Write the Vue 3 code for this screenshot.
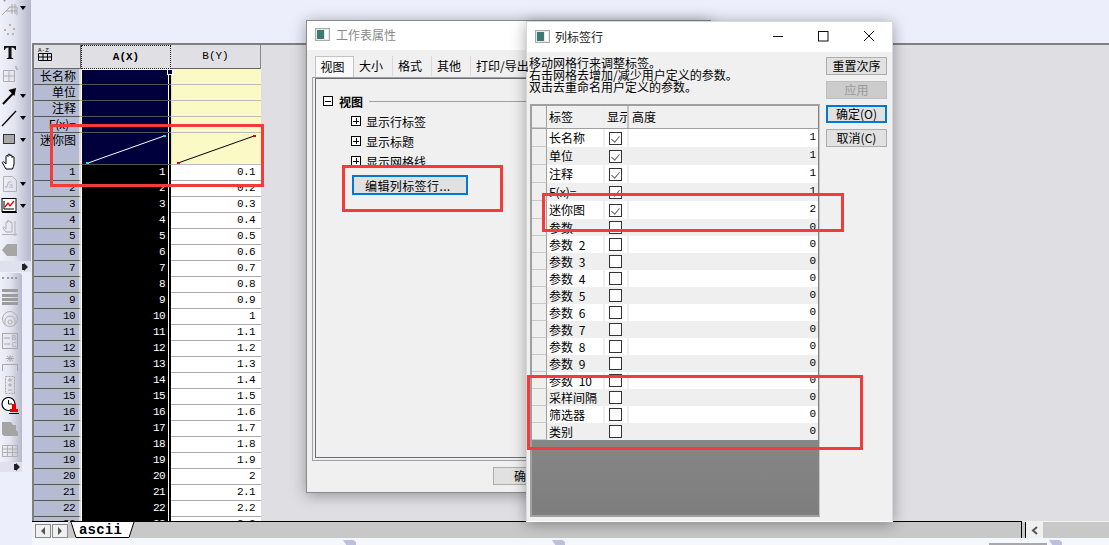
<template>
  <div class="screen">
    <aside class="dock">
      <div class="bar bar--top">
        <div class="bar__items bar__items--top">
          <div class="tool">
            <svg width="18" height="18" viewBox="0 0 18 18" fill="none" stroke="#a9a9a9"><path d="M1 16 L9 8 M5 12 h11 M8 8 h8 v8 M11 5 v10 M14 5 v10" /><path d="M0 -2 h7 l-3.5 5 z" fill="#9a9a9a" stroke="none" /></svg>
            <i class="caret"></i>
          </div>
          <div class="tool">
            <svg width="18" height="18" viewBox="0 0 18 18" fill="#b4b4b4"><rect x="8" y="3" width="2" height="2" /><rect x="3" y="8" width="2" height="2" /><rect x="12" y="7" width="2" height="2" /><rect x="6" y="12" width="2" height="2" /><rect x="11" y="12" width="2" height="2" /></svg>
          </div>
          <div class="tool">
            <svg width="18" height="18" viewBox="0 0 18 18" fill="#111"><path d="M3 3 h12 v4 h-1 c-.3-1.6-1-2.6-3.500-2.600 v9.500 c0 .9.4 1 1.700 1.100 v1 h-6.400 v-1 c1.300-.1 1.700-.2 1.700-1.100 v-9.500 c-2.500 0-3.200 1-3.500 2.600 h-1 z" /></svg>
          </div>
          <div class="tool">
            <svg width="18" height="18" viewBox="0 0 18 18" fill="none" stroke="#b0b0b0"><path d="M2.500 5.500 h11 v11 h-11 z M8 5.500 v11 M2.500 11 h11" /><path d="M14 1 l2 4 M15 1 l2 4" /></svg>
          </div>
          <div class="tool">
            <svg width="18" height="18" viewBox="0 0 18 18" fill="#000"><path d="M2 17 L13 5.500" stroke="#000" stroke-width="2" /><path d="M7.500 3 L15 1 L13.500 9 z" /></svg>
            <i class="caret"></i>
          </div>
          <div class="tool">
            <svg width="18" height="18" viewBox="0 0 18 18"><path d="M1 17 L15 2" stroke="#000" stroke-width="1.300" /></svg>
            <i class="caret"></i>
          </div>
          <div class="tool">
            <svg width="18" height="18" viewBox="0 0 18 18"><rect x="2.500" y="3.500" width="11" height="9" fill="#a8a8a8" stroke="#333" /></svg>
            <i class="caret"></i>
          </div>
          <div class="tool">
            <svg width="18" height="18" viewBox="0 0 18 18" fill="#fff" stroke="#000"><path d="M5 16 L1.500 10 c-.5-1 1-1.800 1.800-.8 L5 11 V3.500 c0-1.300 2-1.300 2 0 V2 c0-1.300 2-1.300 2 0 v1 c0-1.300 2-1.300 2 0 v1.500 c0-1.300 2-1.300 2 0 V11 c0 2-1 3-1.500 5 z" /></svg>
          </div>
          <div class="tool">
            <svg width="18" height="18" viewBox="0 0 18 18" fill="none" stroke="#b4b4b4"><path d="M2.500 1.500 h9 l4 4 v11 h-13 z" /><path d="M4 11 l1.500 2 l2-6 h3" /><text x="8" y="13" font-size="7" font-family="Liberation Sans" fill="#b4b4b4" stroke="none">a</text></svg>
            <i class="caret"></i>
          </div>
          <div class="tool">
            <svg width="18" height="18" viewBox="0 0 18 18" fill="none"><rect x="1" y="1.500" width="14" height="13" fill="#fff" stroke="#000" /><path d="M3 4 v8 h10" stroke="#000" /><path d="M4 10 L7 6 L9 9 L13 4" stroke="#e00000" stroke-width="1.300" /><path d="M1 15.500 h15" stroke="#000" /></svg>
            <i class="caret"></i>
          </div>
          <div class="tool">
            <svg width="18" height="18" viewBox="0 0 18 18" fill="none" stroke="#b2b2b2"><path d="M5 13 L2 9 c-.5-1 1-1.500 1.500-.8 L5 10 V3.500 c0-1 1.500-1 1.500 0 V2 c0-1 1.500-1 1.500 0 v1 c0-1 1.500-1 1.500 0 v1 c0-1 1.500-1 1.500 0 V13 z" /><path d="M1 15.500 h15 M14 2 v15" /></svg>
          </div>
          <div class="tool">
            <svg width="18" height="18" viewBox="0 0 18 18" fill="#a6a6a6"><path d="M1 9 L6 3 h10 v12 H6 z" /></svg>
          </div>
        </div>
        <div class="bar__foot"><i class="bar__more"></i></div>
      </div>

      <div class="bar bar--side">
        <div class="bar__grip"></div>
        <div class="bar__items">
          <div class="tool">
            <svg width="18" height="18" viewBox="0 0 18 18" fill="#9c9c9c"><rect x="1" y="1" width="16" height="3" /><rect x="1" y="6" width="16" height="3" /><rect x="1" y="10" width="16" height="3" /><rect x="1" y="14" width="16" height="3" /></svg>
          </div>
          <div class="tool">
            <svg width="18" height="18" viewBox="0 0 18 18" fill="none" stroke="#b0b0b0"><circle cx="9" cy="9" r="7.500" /><path d="M4 15 v-4 a5 5 0 0 1 10 0 v4" /><circle cx="9" cy="12" r="2" /></svg>
          </div>
          <div class="tool">
            <svg width="18" height="18" viewBox="0 0 18 18" fill="none" stroke="#a8a8a8"><rect x="1.500" y="1.500" width="15" height="15" /><path d="M3 6 h6 M3 12 h6" /><text x="10.500" y="8" font-size="7" font-family="Liberation Sans" fill="#a8a8a8" stroke="none">B</text><text x="10.500" y="15" font-size="7" font-family="Liberation Sans" fill="#a8a8a8" stroke="none">C</text></svg>
          </div>
          <div class="tool">
            <svg width="18" height="18" viewBox="0 0 18 18" fill="none" stroke="#a8a8a8"><path d="M1.500 17 V10.500 h15 V17 M6 2 l6 5 M12 2 l-6 5 M9 1 v7 M5 4.500 h8" /></svg>
          </div>
          <div class="tool">
            <svg width="18" height="18" viewBox="0 0 18 18" fill="none" stroke="#a8a8a8"><rect x="4.500" y="0.500" width="9" height="17" stroke-dasharray="2 1" /><path d="M7 4 h4 M9 2 v4 M7 9 h4 M9 7 v4 M7 14 h4" /></svg>
          </div>
          <div class="tool tool--up">
            <svg width="18" height="18" viewBox="0 0 18 18" fill="none"><circle cx="7.500" cy="7" r="6.500" fill="#fff" stroke="#000" stroke-width="1.200" /><path d="M7.500 3 V7 H11" stroke="#000" /><path d="M11 7 h4 v5 h2 v3 H9 v-3 h2 z" fill="#e00000" /><path d="M8 16.500 h10" stroke="#000" /></svg>
          </div>
          <div class="tool">
            <svg width="18" height="18" viewBox="0 0 18 18" fill="#a4a4a4"><path d="M1 2 h9 l2 3 h3 v5 l2 2 v4 H3 L1 14 z" /></svg>
          </div>
          <div class="tool">
            <svg width="18" height="18" viewBox="0 0 18 18" fill="none" stroke="#b0b0b0"><path d="M1.500 3.500 h15 v11 h-15 z M1.500 7 h15 M1.500 10.500 h15 M6.500 3.500 v11 M11.500 3.500 v11" /></svg>
          </div>
        </div>
        <div class="bar__foot bar__foot--side"><i class="bar__more"></i></div>
      </div>
    </aside>

    <main class="workspace">
      <section class="sheet">
        <div class="grid">
          <div class="corner">
            <svg width="16" height="16" viewBox="0 0 16 16" fill="none" stroke="#000"><path d="M1.500 7.500 h13 v7 h-13 z M1.500 11 h13 M6 7.500 v7 M10.500 7.500 v7" /><text x="1" y="5.500" font-size="6" font-family="Liberation Mono" fill="#000" stroke="none">A-Z</text></svg>
          </div>
          <div class="colhead colhead--active">A(X)</div>
          <div class="colhead">B(Y)</div>
          <div class="gap"></div>

          <template v-for="row in labelRows" :key="row.name">
            <div class="rowhead" :class="{ 'rowhead--tall': row.tall }">{{ row.name }}</div>
            <div class="meta meta--a" :class="{ 'meta--tall': row.tall }">
              <svg v-if="row.tall" width="86" height="32" viewBox="0 0 86 32">
                <path d="M6 30 L82 3" stroke="#fff" />
                <rect x="4" y="29" width="3" height="2" fill="#19e3e3" />
                <rect x="81" y="2" width="3" height="2" fill="#19e3e3" />
              </svg>
            </div>
            <div class="meta meta--b" :class="{ 'meta--tall': row.tall }">
              <svg v-if="row.tall" width="88" height="32" viewBox="0 0 88 32">
                <path d="M6 30 L82 3" stroke="#000" />
                <rect x="5" y="29" width="3" height="2" fill="#e00000" />
                <rect x="81" y="2" width="3" height="2" fill="#e00000" />
              </svg>
            </div>
            <div class="gap"></div>
          </template>

          <template v-for="row in dataRows" :key="row.n">
            <div class="rowhead num">{{ row.n }}</div>
            <div class="cell cell--a num">{{ row.n }}</div>
            <div class="cell cell--b num">{{ row.v }}</div>
            <div class="gap"></div>
          </template>
          <i class="selection-top"></i>
          <i class="handle"></i>
        </div>
      </section>

      <footer class="tabbar">
        <div class="tabbar__nav">
          <button class="nav-btn"><i class="tri tri--left"></i></button>
          <button class="nav-btn"><i class="tri tri--right"></i></button>
        </div>
        <div class="sheet-tab">
          <svg class="sheet-tab__edge" width="66" height="16" viewBox="0 0 66 16"><path d="M1 0 L6 15.500 H59 L64 0" fill="#fff" stroke="#000" /></svg>
          <span class="sheet-tab__text">ascii</span>
        </div>
        <div class="tabbar__rest"></div>
        <div class="tabbar__scroll">
          <button class="scroll-btn">
            <svg width="8" height="9" viewBox="0 0 8 9"><path d="M6 1 L2 4.500 L6 8" fill="none" stroke="#555" stroke-width="2" /></svg>
          </button>
        </div>
      </footer>
      <div class="statusline"></div>
    </main>

    <section class="win win--props">
      <header class="win__title">
        <svg class="win__icon" width="15" height="13" viewBox="0 0 15 13"><rect x="0.500" y="0.500" width="14" height="12" fill="#e8e8e8" stroke="#aaa" /><rect x="2" y="2" width="7" height="9" fill="#3c7a72" /><rect x="10" y="2" width="3" height="9" fill="#fff" /></svg>
        <span class="win__text win__text--dim">工作表属性</span>
      </header>
      <div class="props">
        <nav class="tabs">
          <span class="tab tab--on">视图</span>
          <span class="tab">大小</span>
          <span class="tab">格式</span>
          <span class="tab">其他</span>
          <span class="tab tab--wide">打印/导出</span>
        </nav>
        <div class="panel">
          <div class="panel__inner">
            <div class="tree">
              <div class="tree__root">
                <i class="box box--minus"></i>
                <b>视图</b>
                <span class="tree__rule"></span>
              </div>
              <div v-for="item in treeItems" :key="item" class="tree__item">
                <i class="box box--plus"></i>
                <span>{{ item }}</span>
              </div>
            </div>
            <button class="edit-btn">编辑列标签行...</button>
          </div>
        </div>
        <div class="props__foot"><button class="plain-btn plain-btn--ok">确定</button></div>
      </div>
    </section>

    <section class="win win--labels">
      <header class="win__title win__title--labels">
        <svg class="win__icon" width="15" height="13" viewBox="0 0 15 13"><rect x="0.500" y="0.500" width="14" height="12" fill="#e8e8e8" stroke="#aaa" /><rect x="2" y="2" width="7" height="9" fill="#3c7a72" /><rect x="10" y="2" width="3" height="9" fill="#fff" /></svg>
        <span class="win__text">列标签行</span>
        <div class="win__ctrls">
          <svg width="12" height="12" viewBox="0 0 12 12"><path d="M1 6.500 h10" stroke="#111" /></svg>
          <svg width="12" height="12" viewBox="0 0 12 12"><rect x="1.500" y="1.500" width="9.500" height="9.500" fill="none" stroke="#111" /></svg>
          <svg width="12" height="12" viewBox="0 0 12 12"><path d="M1 1 L11 11 M11 1 L1 11" stroke="#111" /></svg>
        </div>
      </header>
      <div class="labels">
        <div class="labels__main">
          <p class="hint">移动网格行来调整标签。<br />右击网格去增加/减少用户定义的参数。<br />双击去重命名用户定义的参数。</p>
          <div class="lgrid">
            <div class="lrow lrow--head">
              <span class="lrow__stub"></span>
              <span class="lrow__name">标签</span>
              <span class="lrow__show">显示</span>
              <span class="lrow__hname">高度</span>
            </div>
            <div
              v-for="(row, i) in gridRows"
              :key="row.name"
              class="lrow"
              :class="{ 'lrow--alt': i % 2 === 1, 'lrow--short': i > 4 }"
            >
              <span class="lrow__stub"></span>
              <span class="lrow__name">{{ row.name }}</span>
              <span class="lrow__show"><i class="check" :class="{ 'check--on': row.on }"></i></span>
              <span class="lrow__height">{{ row.h }}</span>
            </div>
            <div class="lgrid__empty"></div>
          </div>
        </div>
        <div class="labels__btns">
          <button class="plain-btn">重置次序</button>
          <button class="plain-btn plain-btn--off">应用</button>
          <button class="plain-btn plain-btn--focus">确定(O)</button>
          <button class="plain-btn">取消(C)</button>
        </div>
      </div>
    </section>

    <!-- hand drawn annotation boxes from the screenshot -->
    <i class="mark mark--spark"></i>
    <i class="mark mark--edit"></i>
    <i class="mark mark--mini"></i>
    <i class="mark mark--extra"></i>

    <i class="tip tip--a"></i>
    <i class="tip tip--b"></i>
    <i class="tip tip--c"></i>
    <i class="edge-line"></i>
  </div>
</template>

<script setup>
const labelRows = [
  { name: '长名称' },
  { name: '单位' },
  { name: '注释' },
  { name: 'F(x)=' },
  { name: '迷你图', tall: true },
]

const dataRows = Array.from({ length: 23 }, (_, i) => ({ n: i + 1, v: String((i + 1) / 10) }))

const treeItems = ['显示行标签', '显示标题', '显示网格线']

const gridRows = [
  { name: '长名称', on: true, h: 1 },
  { name: '单位', on: true, h: 1 },
  { name: '注释', on: true, h: 1 },
  { name: 'F(x)=', on: true, h: 1 },
  { name: '迷你图', on: true, h: 2 },
  { name: '参数', on: false, h: 0 },
  ...[2, 3, 4, 5, 6, 7, 8, 9, 10].map((n) => ({ name: '参数 ' + n, on: false, h: 0 })),
  { name: '采样间隔', on: false, h: 0 },
  { name: '筛选器', on: false, h: 0 },
  { name: '类别', on: false, h: 0 },
]
</script>

<style scoped>
.screen {
  position: relative;
  display: flex;
  width: 1109px;
  height: 545px;
  overflow: hidden;
  background: #eceefb;
  font-family: "Noto Sans CJK SC", "Liberation Sans", sans-serif;
  font-size: 12px;
  color: #000;
}

button {
  font-family: inherit;
  padding: 0;
  margin: 0;
}

/* left dock */
.dock {
  flex: 0 0 32px;
  display: flex;
  flex-direction: column;
  gap: 1px;
  overflow: hidden;
}

.bar {
  background: linear-gradient(90deg, #eef0fa 0%, #e2e4f0 45%, #b6b8cc 100%);
  display: flex;
  flex-direction: column;
}

.bar--top {
  width: 31px;
  height: 272px;
  border-bottom-right-radius: 3px;
}

.bar--side {
  width: 22px;
  height: 199px;
  border-top-right-radius: 3px;
  border-bottom-right-radius: 3px;
}

.bar__items {
  flex: 1;
}

.bar__items--top {
  margin-top: -3px;
}

.bar__grip {
  height: 10px;
  margin: 4px 0 0 2px;
  border-top: 2px dotted #9a9aa5;
  width: 15px;
}

.bar__foot {
  height: 16px;
  background: #dfe1ee;
  display: flex;
  align-items: center;
  justify-content: flex-end;
  padding-right: 3px;
}

.bar__foot--side {
  height: 13px;
  padding-right: 2px;
}

.bar__more {
  width: 0;
  height: 0;
  border-left: 4px solid #222;
  border-top: 4px solid transparent;
  border-bottom: 4px solid transparent;
  margin-left: 3px;
  box-shadow: -3px 0 0 -1px #222;
}

.tool {
  position: relative;
  height: 22px;
  display: flex;
  align-items: center;
  padding-left: 1px;
}

.tool--up svg {
  margin-top: -3px;
}

.caret {
  position: absolute;
  left: 20px;
  top: 9px;
  width: 0;
  height: 0;
  border-top: 4px solid #000;
  border-left: 3px solid transparent;
  border-right: 3px solid transparent;
}

/* worksheet */
.workspace {
  flex: 1;
  display: flex;
  flex-direction: column;
  padding-top: 43px;
  min-width: 0;
}

.sheet {
  flex: 1;
  min-height: 0;
  overflow: hidden;
  background: #dfdee3;
  border-top: 2px solid #808080;
  border-left: 2px solid #808080;
}

.grid {
  position: relative;
  display: grid;
  grid-template-columns: 47px 90px 90px 1fr;
  grid-auto-rows: min-content;
}

.corner {
  height: 24px;
  background: #dfdee3;
  padding: 1px 0 0 3px;
  box-sizing: border-box;
  border-bottom: 1px solid #666;
  border-right: 1px solid #666;
}

.colhead {
  height: 24px;
  box-sizing: border-box;
  background: #e0dfe3;
  border-bottom: 1px solid #666;
  border-right: 1px solid #888;
  font-family: "Liberation Mono", monospace;
  font-size: 11px;
  line-height: 22px;
  text-align: center;
}

.colhead--active {
  font-weight: 700;
  border: 1px dotted #222;
}

.gap {
  min-width: 0;
}

.rowhead {
  height: 16px;
  box-sizing: border-box;
  background: #b4bbd3;
  border-bottom: 1px solid #555;
  border-right: 2px solid #dfdee3;
  text-align: right;
  padding-right: 3px;
  line-height: 13px;
  overflow: hidden;
}

.rowhead--tall {
  height: 32px;
  line-height: 13px;
}

.rowhead.num {
  line-height: 15px;
  padding-right: 4px;
}

.meta {
  height: 16px;
  box-sizing: border-box;
  border-bottom: 1px solid #aaa;
}

.meta--tall {
  height: 32px;
}

.meta svg {
  display: block;
}

.meta--a {
  background: linear-gradient(90deg, #00003c 86px, #ffffd0 86px, #ffffd0 87px, #000 87px);
  border-left: 1px solid #ffffd0;
  border-bottom-color: #555;
}

.meta--b {
  background: #fbfac6;
  border-left: 1px solid #ddd;
  border-bottom-color: #bbb;
}

.num {
  font-family: "Liberation Mono", monospace;
  font-size: 11px;
  letter-spacing: -0.6px;
}

.cell {
  height: 16px;
  box-sizing: border-box;
  text-align: right;
  line-height: 15px;
  overflow: hidden;
}

.cell--a {
  background: linear-gradient(90deg, #000 86px, #fff 86px, #fff 87px, #000 87px);
  color: #fff;
  border-left: 1px solid #fff;
  padding-right: 6px;
}

.cell--b {
  background: #fff;
  border-bottom: 1px solid #aaa;
  padding-right: 6px;
}

.selection-top {
  position: absolute;
  left: 47px;
  top: 24px;
  width: 88px;
  height: 1px;
  background: #ffffd0;
}

.handle {
  position: absolute;
  left: 133px;
  top: 24px;
  width: 4px;
  height: 4px;
  background: #00003c;
  border: 1px solid #fff;
}

.tabbar {
  display: flex;
  align-items: stretch;
  height: 17px;
  background: #c8c8c8;
  box-sizing: content-box;
}

.tabbar__nav {
  display: flex;
  gap: 1px;
  padding: 2px 0 0 3px;
  background: #f2f2f6;
  border-top: 1px solid #000;
}

.nav-btn {
  width: 16px;
  height: 14px;
  background: #f0f0f0;
  border: 1px solid #8a8a8a;
  display: flex;
  align-items: center;
  justify-content: center;
}

.tri {
  width: 0;
  height: 0;
  border-top: 4px solid transparent;
  border-bottom: 4px solid transparent;
}

.tri--left {
  border-right: 4px solid #555;
}

.tri--right {
  border-left: 4px solid #555;
}

.sheet-tab {
  position: relative;
  flex: 0 0 66px;
  margin-left: 2px;
  border-top: 1px solid #000;
}

.sheet-tab__edge {
  display: block;
}

.sheet-tab__text {
  position: absolute;
  left: 9px;
  top: 0;
  font-family: "Liberation Mono", monospace;
  font-weight: 700;
  font-size: 14px;
  line-height: 16px;
  letter-spacing: 0.2px;
}

.tabbar__rest {
  flex: 1;
  border-top: 1px solid #000;
  border-right: 1px solid #000;
}

.tabbar__scroll {
  flex: 0 0 87px;
  display: flex;
  box-sizing: border-box;
  padding-left: 3px;
  border-top: 1px solid #f0f0f0;
}

.scroll-btn {
  width: 18px;
  height: 16px;
  background: #f0f0f0;
  border: 0;
  border-left: 1px solid #000;
  display: flex;
  align-items: center;
  justify-content: center;
}

.statusline {
  height: 7px;
  background: #f5f7fd;
}

/* dialogs */
.win {
  position: absolute;
  box-sizing: border-box;
  background: #f0f0f0;
  display: flex;
  flex-direction: column;
  box-shadow: 0 2px 14px rgba(0, 0, 0, 0.35);
}

.win--props {
  left: 306px;
  top: 20px;
  width: 405px;
  height: 473px;
  border: 1px solid #8a8a8a;
}

.win--labels {
  left: 526px;
  top: 21px;
  width: 367px;
  height: 501px;
  border: 1px solid #d8d8d8;
  border-bottom-color: #fff;
}

.win__title {
  flex: 0 0 29px;
  box-sizing: border-box;
  display: flex;
  align-items: center;
  background: #fff;
  padding: 0 0 2px 8px;
  gap: 6px;
}

.win__title--labels {
  flex-basis: 30px;
  gap: 5px;
}

.win__text {
  font-size: 12px;
  color: #222;
}

.win__text--dim {
  color: #8a8a8a;
}

.win__ctrls {
  display: flex;
  margin-left: auto;
  gap: 33px;
  padding-right: 17px;
}

.win__ctrls svg:last-child {
  margin-left: 1px;
}

.props {
  flex: 1;
  display: flex;
  flex-direction: column;
  padding: 6px 0 0 5px;
  min-height: 0;
}

.tabs {
  display: flex;
  height: 21px;
  padding-left: 3px;
  position: relative;
  z-index: 1;
  white-space: nowrap;
}

.tab {
  width: 39px;
  height: 20px;
  box-sizing: border-box;
  padding-right: 4px;
  text-align: center;
  line-height: 20px;
  font-size: 12px;
  border-right: 1px solid #d9d9d9;
}

.tab--on {
  height: 21px;
  background: #fafafa;
  border: 1px solid #c4c4c4;
  border-bottom: 0;
}

.tab--wide {
  width: 70px;
  text-align: left;
  padding: 0 0 0 5px;
  border-right: 0;
}

.panel {
  height: 384px;
  box-sizing: border-box;
  border: 1px solid #a0a0a0;
  padding: 0 2px 2px;
}

.panel__inner {
  height: 100%;
  box-sizing: border-box;
  border: 1px solid #6d6d75;
  padding: 12px 0 0 7px;
}

.tree {
  height: 74px;
  overflow: hidden;
}

.tree__root {
  display: flex;
  align-items: center;
  height: 20px;
  gap: 6px;
}

.tree__root b {
  font-size: 12px;
}

.tree__rule {
  flex: 1;
  height: 1px;
  background: #a0a0a0;
}

.tree__item {
  display: flex;
  align-items: center;
  gap: 5px;
  height: 20px;
  margin-left: 28px;
  white-space: nowrap;
}

.box {
  position: relative;
  flex: 0 0 auto;
  width: 10px;
  height: 10px;
  border: 1px solid #000;
  box-sizing: border-box;
  background: #fff;
  background-repeat: no-repeat;
  background-position: center;
}

.box--minus {
  background-image: linear-gradient(#000, #000);
  background-size: 6px 1px;
}

.box--plus {
  background-image: linear-gradient(#000, #000), linear-gradient(#000, #000);
  background-size: 6px 1px, 1px 6px;
}

.edit-btn {
  display: block;
  margin: 10px 0 0 29px;
  width: 116px;
  height: 20px;
  background: #e1e1e1;
  border: 2px solid #0078d7;
  font-size: 12px;
  text-align: left;
  padding-left: 11px;
  letter-spacing: 0.4px;
}

.props__foot {
  padding: 6px 0 0 181px;
}

.plain-btn {
  display: block;
  width: 61px;
  height: 18px;
  box-sizing: border-box;
  background: #e1e1e1;
  border: 1px solid #adadad;
  font-size: 12px;
  line-height: 16px;
  color: #000;
}

.plain-btn--ok {
  width: 64px;
  text-align: left;
  padding-left: 20px;
}

.plain-btn--off {
  background: #cccccc;
  border-color: #bfbfbf;
  color: #9a9a9a;
}

.plain-btn--focus {
  border: 2px solid #0078d7;
  line-height: 14px;
}

.labels {
  flex: 1;
  display: flex;
  min-height: 0;
  padding: 5px 0 0 2px;
}

.labels__main {
  width: 294px;
}

.hint {
  margin: 0;
  font-size: 12px;
  line-height: 12px;
  white-space: nowrap;
}

.lgrid {
  margin: 11px 0 0 1px;
  width: 290px;
  height: 413px;
  box-sizing: border-box;
  border: 2px solid #a0a0a0;
  border-right: 1px solid #c8c8c8;
  display: flex;
  flex-direction: column;
  background: #808080;
}

.lrow {
  flex: 0 0 18px;
  display: grid;
  grid-template-columns: 15px 58px 24px 1fr;
  background: #fff;
  line-height: 17px;
  border-right: 1px solid #808080;
}

.lrow--alt {
  background: #efefef;
}

.lrow--short {
  flex-basis: 17px;
}

.lrow--head {
  flex-basis: 23px;
  background: #f0f0f0;
  line-height: 22px;
  border-bottom: 1px solid #a0a0a0;
  box-sizing: border-box;
}

.lrow > span {
  overflow: hidden;
  white-space: nowrap;
  box-sizing: border-box;
}

.lrow__stub {
  background: #efefef;
  border-right: 1px solid #a0a0a0;
  border-bottom: 1px solid #c8c8c8;
}

.lrow__name {
  padding-left: 2px;
  border-right: 2px solid #efefef;
  word-spacing: 3px;
}

.lrow__show {
  display: flex;
  align-items: center;
  padding-left: 4px;
  border-right: 2px solid #efefef;
}

.lrow--head .lrow__show {
  padding-left: 2px;
  border-right-color: #c0c0c0;
}

.lrow__hname {
  padding-left: 3px;
}

.lrow__height {
  text-align: right;
  padding-right: 2px;
  font-family: "Liberation Mono", monospace;
  font-size: 11px;
}

.check {
  position: relative;
  display: block;
  width: 13px;
  height: 13px;
  box-sizing: border-box;
  border: 1px solid #333;
  background: #fff;
}

.check--on::after {
  content: "";
  position: absolute;
  left: 3px;
  top: 1px;
  width: 4px;
  height: 7px;
  border-right: 1.5px solid #666;
  border-bottom: 1.5px solid #666;
  transform: rotate(40deg);
}

.lgrid__empty {
  flex: 1;
  background: linear-gradient(#868686, #7e7e7e);
}

.labels__btns {
  display: flex;
  flex-direction: column;
  gap: 6px;
  padding-left: 3px;
}

/* annotations and odds */
.mark {
  position: absolute;
  box-sizing: border-box;
  border: 3px solid #f43a3a;
}

.mark--spark {
  left: 50px;
  top: 124px;
  width: 214px;
  height: 63px;
}

.mark--edit {
  left: 342px;
  top: 165px;
  width: 161px;
  height: 47px;
}

.mark--mini {
  left: 542px;
  top: 193px;
  width: 302px;
  height: 39px;
}

.mark--extra {
  left: 527px;
  top: 375px;
  width: 336px;
  height: 75px;
}

.tip {
  position: absolute;
  top: 540px;
  width: 13px;
  height: 5px;
  background: #bcc0dc;
  clip-path: polygon(0 0, 80% 0, 100% 40%, 100% 100%, 25% 100%);
}

.tip--a {
  left: 343px;
}

.tip--b {
  left: 552px;
}

.tip--c {
  left: 1049px;
}

.edge-line {
  position: absolute;
  left: 989px;
  top: 543px;
  width: 58px;
  height: 2px;
  background: #a8a8ac;
}
</style>
